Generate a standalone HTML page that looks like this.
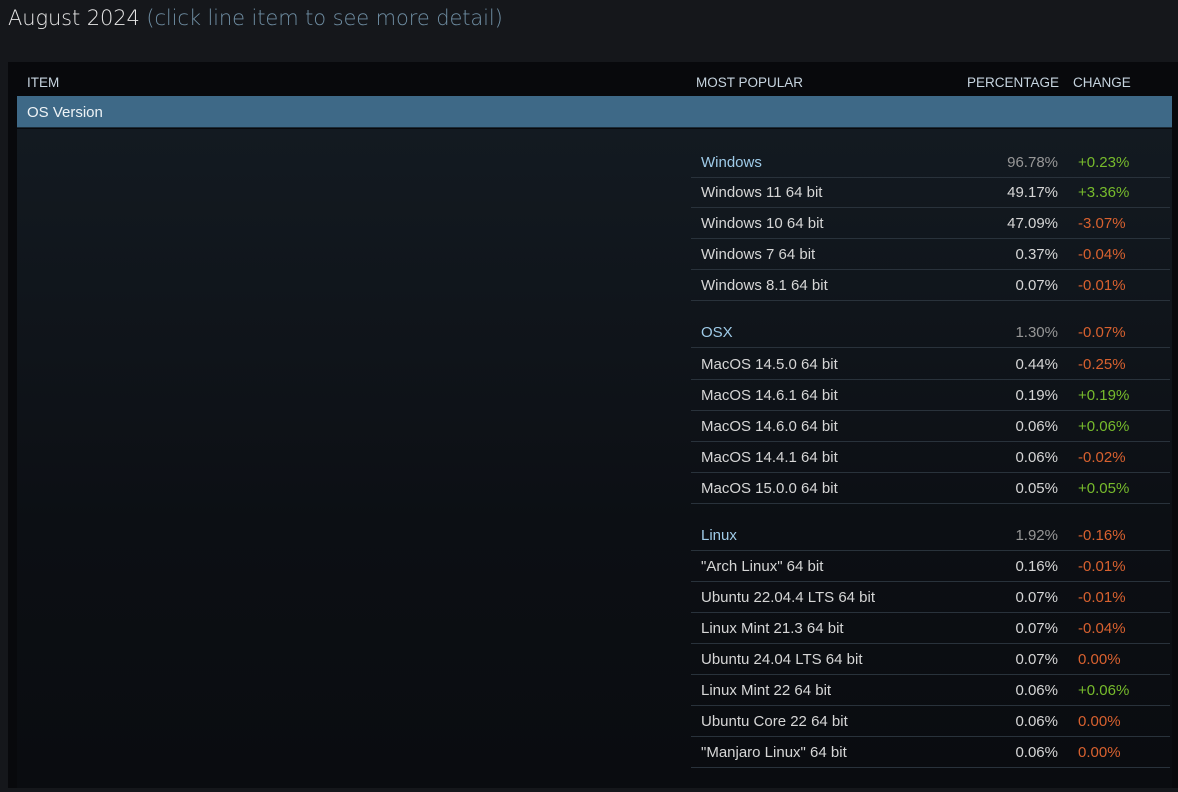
<!DOCTYPE html>
<html><head><style>
*{margin:0;padding:0;box-sizing:border-box}
body{width:1178px;height:792px;background:#15171b;font-family:"Liberation Sans",sans-serif;position:relative;overflow:hidden}
.title{position:absolute;left:8px;top:6px;font-size:21px;color:#e6e6e6;font-family:"DejaVu Sans","Liberation Sans",sans-serif;font-weight:300;letter-spacing:-0.1px}
.title span{color:#6f8ea3}
.panel{position:absolute;left:8px;top:62px;width:1170px;height:726px;background:#08090c}
.hdr{position:absolute;top:75px;font-size:13.5px;color:#c6d4df}
.bar{position:absolute;left:17px;top:96px;width:1155px;height:32px;background:#3e6987;border-bottom:1px solid #1c2c38}
.bar div{position:absolute;left:10px;top:8px;font-size:15px;color:#eef3f6}
.content{position:absolute;left:17px;top:129px;width:1155px;height:659px;background:linear-gradient(#131a21,#0c0f14 60%,#0a0c10)}
.row{position:absolute;left:691px;width:479px;height:31px;border-bottom:1px solid #29323b;font-size:15px;color:#d6d6d6}
.row .n{position:absolute;left:10px;top:7px}
.row .p{position:absolute;right:112px;top:7px}
.row .c{position:absolute;left:387px;top:7px}
.g .n{color:#9fcbe8}.g .p{color:#979797}
.up{color:#77bb2c}.dn{color:#d8612f}
</style></head><body>
<div class="title">August 2024 <span>(click line item to see more detail)</span></div>
<div class="panel"></div>
<div class="hdr" style="left:27px">ITEM</div>
<div class="hdr" style="left:696px">MOST POPULAR</div>
<div class="hdr" style="left:967px">PERCENTAGE</div>
<div class="hdr" style="left:1073px">CHANGE</div>
<div class="content"></div>
<div class="bar"><div>OS Version</div></div>

<div class="row g" style="top:147px"><span class="n">Windows</span><span class="p">96.78%</span><span class="c up">+0.23%</span></div>
<div class="row" style="top:177px"><span class="n">Windows 11 64 bit</span><span class="p">49.17%</span><span class="c up">+3.36%</span></div>
<div class="row" style="top:208px"><span class="n">Windows 10 64 bit</span><span class="p">47.09%</span><span class="c dn">-3.07%</span></div>
<div class="row" style="top:239px"><span class="n">Windows 7 64 bit</span><span class="p">0.37%</span><span class="c dn">-0.04%</span></div>
<div class="row" style="top:270px"><span class="n">Windows 8.1 64 bit</span><span class="p">0.07%</span><span class="c dn">-0.01%</span></div>

<div class="row g" style="top:317px"><span class="n">OSX</span><span class="p">1.30%</span><span class="c dn">-0.07%</span></div>
<div class="row" style="top:349px"><span class="n">MacOS 14.5.0 64 bit</span><span class="p">0.44%</span><span class="c dn">-0.25%</span></div>
<div class="row" style="top:380px"><span class="n">MacOS 14.6.1 64 bit</span><span class="p">0.19%</span><span class="c up">+0.19%</span></div>
<div class="row" style="top:411px"><span class="n">MacOS 14.6.0 64 bit</span><span class="p">0.06%</span><span class="c up">+0.06%</span></div>
<div class="row" style="top:442px"><span class="n">MacOS 14.4.1 64 bit</span><span class="p">0.06%</span><span class="c dn">-0.02%</span></div>
<div class="row" style="top:473px"><span class="n">MacOS 15.0.0 64 bit</span><span class="p">0.05%</span><span class="c up">+0.05%</span></div>

<div class="row g" style="top:520px"><span class="n">Linux</span><span class="p">1.92%</span><span class="c dn">-0.16%</span></div>
<div class="row" style="top:551px"><span class="n">"Arch Linux" 64 bit</span><span class="p">0.16%</span><span class="c dn">-0.01%</span></div>
<div class="row" style="top:582px"><span class="n">Ubuntu 22.04.4 LTS 64 bit</span><span class="p">0.07%</span><span class="c dn">-0.01%</span></div>
<div class="row" style="top:613px"><span class="n">Linux Mint 21.3 64 bit</span><span class="p">0.07%</span><span class="c dn">-0.04%</span></div>
<div class="row" style="top:644px"><span class="n">Ubuntu 24.04 LTS 64 bit</span><span class="p">0.07%</span><span class="c dn">0.00%</span></div>
<div class="row" style="top:675px"><span class="n">Linux Mint 22 64 bit</span><span class="p">0.06%</span><span class="c up">+0.06%</span></div>
<div class="row" style="top:706px"><span class="n">Ubuntu Core 22 64 bit</span><span class="p">0.06%</span><span class="c dn">0.00%</span></div>
<div class="row" style="top:737px"><span class="n">"Manjaro Linux" 64 bit</span><span class="p">0.06%</span><span class="c dn">0.00%</span></div>
</body></html>
